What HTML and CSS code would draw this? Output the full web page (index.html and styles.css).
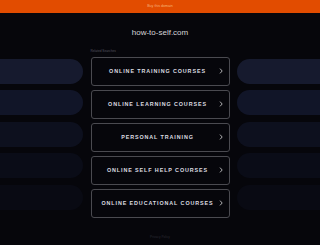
FILE: index.html
```html
<!DOCTYPE html>
<html>
<head>
<meta charset="utf-8">
<link rel="stylesheet" href="styles.css">
</head>
<body>
<div class="topbar"><a class="buy">Buy this domain</a></div>
<div class="domain">how-to-self.com</div>
<div class="layout">
  <div class="side left">
    <div class="pill p1"></div>
    <div class="pill p2"></div>
    <div class="pill p3"></div>
    <div class="pill p4"></div>
    <div class="pill p5"></div>
  </div>
  <div class="center">
    <div class="label">Related Searches</div>
    <a class="btn"><span>ONLINE TRAINING COURSES</span><svg class="chev" viewBox="0 0 4 6"><path d="M1 0.6 L3.2 3 L1 5.4" fill="none" stroke="#ddd" stroke-width="0.8"/></svg></a>
    <a class="btn"><span>ONLINE LEARNING COURSES</span><svg class="chev" viewBox="0 0 4 6"><path d="M1 0.6 L3.2 3 L1 5.4" fill="none" stroke="#ddd" stroke-width="0.8"/></svg></a>
    <a class="btn"><span>PERSONAL TRAINING</span><svg class="chev" viewBox="0 0 4 6"><path d="M1 0.6 L3.2 3 L1 5.4" fill="none" stroke="#ddd" stroke-width="0.8"/></svg></a>
    <a class="btn"><span>ONLINE SELF HELP COURSES</span><svg class="chev" viewBox="0 0 4 6"><path d="M1 0.6 L3.2 3 L1 5.4" fill="none" stroke="#ddd" stroke-width="0.8"/></svg></a>
    <a class="btn"><span>ONLINE EDUCATIONAL COURSES</span><svg class="chev" viewBox="0 0 4 6"><path d="M1 0.6 L3.2 3 L1 5.4" fill="none" stroke="#ddd" stroke-width="0.8"/></svg></a>
  </div>
  <div class="side right">
    <div class="pill p1"></div>
    <div class="pill p2"></div>
    <div class="pill p3"></div>
    <div class="pill p4"></div>
    <div class="pill p5"></div>
  </div>
</div>
<div class="footer">Privacy Policy</div>
</body>
</html>
```
FILE: styles.css
```css
html, body {
  margin: 0;
  padding: 0;
  background: #06060b;
  width: 320px;
  height: 245px;
  overflow: hidden;
  font-family: "Liberation Sans", Arial, sans-serif;
}
.topbar {
  height: 12.5px;
  background: #e24c00;
  display: flex;
  align-items: center;
  justify-content: center;
}
.buy {
  font-size: 3.6px;
  color: #f6b27a;
}
.domain {
  text-align: center;
  color: #d4d4d8;
  font-size: 8px;
  margin-top: 15px;
  line-height: 9px;
}
.layout {
  display: flex;
  gap: 7.5px;
  margin-top: 12px;
}
.side {
  width: 83px;
  flex: none;
  display: flex;
  flex-direction: column;
  gap: 6.5px;
  padding-top: 10px;
}
.center {
  width: 139px;
  flex: none;
  display: flex;
  flex-direction: column;
  gap: 4px;
}
.label {
  font-size: 3.2px;
  color: #555560;
  line-height: 5px;
  height: 5px;
  margin-bottom: -1px;
}
.pill {
  height: 25px;
}
.left .pill { border-radius: 0 12.5px 12.5px 0; }
.right .pill { border-radius: 12.5px 0 0 12.5px; }
.p1 { background: #161a2e; }
.p2 { background: #111528; }
.p3 { background: #0d101e; }
.p4 { background: #0a0c17; }
.p5 { background: #090a13; }
.btn {
  height: 27px;
  border: 1px solid #4a4a50;
  border-radius: 3px;
  display: flex;
  align-items: center;
  justify-content: center;
  position: relative;
  padding-right: 5px;
  color: #dcdce0;
  font-size: 5.4px;
  font-weight: 700;
  letter-spacing: 0.9px;
}
.chev {
  position: absolute;
  right: 5.5px;
  top: 10.5px;
  width: 4px;
  height: 6px;
}
.footer {
  text-align: center;
  font-size: 3.2px;
  color: #2a2a33;
  margin-top: 17px;
}
```
